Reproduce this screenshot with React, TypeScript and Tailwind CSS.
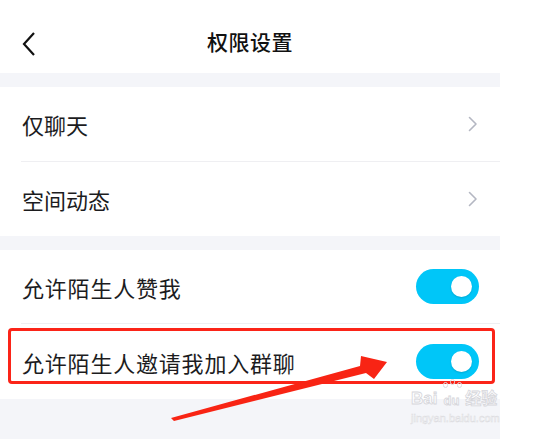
import React from 'react';

const font = { fontFamily: '"Noto Sans CJK SC", "Noto Sans", sans-serif' };

// Chevron pointing right, light gray
const Chevron: React.FC = () => (
  <svg width="10" height="16" viewBox="0 0 10 16" fill="none">
    <path d="M1.5 1.5 L8 8 L1.5 14.5" stroke="#b4b7c2" strokeWidth="1.6" strokeLinecap="round" strokeLinejoin="round" />
  </svg>
);

const Toggle: React.FC = () => (
  <div className="w-[63px] h-[35px] rounded-full bg-[#00c6f8] flex items-center justify-end pr-[7px]">
    <div className="w-[21px] h-[21px] rounded-full bg-white shadow-[0_1px_2px_rgba(0,0,0,0.15)]" />
  </div>
);

const LinkRow: React.FC<{ label: string; h: string }> = ({ label, h }) => (
  <div className={`flex items-center justify-between pl-[22px] pr-[22px] ${h}`}>
    <span className="text-[22px] text-[#1c1c1e] leading-none">{label}</span>
    <Chevron />
  </div>
);

const ToggleRow: React.FC<{ label: string; h: string }> = ({ label, h }) => (
  <div className={`flex items-center justify-between pl-[22px] pr-[21px] ${h}`}>
    <span className="text-[22px] text-[#1c1c1e] leading-none tracking-[0.8px]">{label}</span>
    <Toggle />
  </div>
);

const Divider: React.FC = () => <div className="ml-[21px] h-px bg-[#efeff2]" />;

export default function App() {
  return (
    <div className="relative w-[540px] h-[439px] bg-white overflow-hidden" style={font}>
      <div className="w-[500px] h-full flex flex-col">
        {/* Header */}
        <div className="relative h-[73px] flex items-center justify-center">
          <svg className="absolute left-[21px] top-[31px]" width="16" height="26" viewBox="0 0 16 26" fill="none">
            <path d="M13 2 L3 13 L13 24" stroke="#111" strokeWidth="2.2" strokeLinejoin="miter" />
          </svg>
          <span className="text-[21px] font-medium text-[#111] tracking-[0.5px] mt-[10px]">权限设置</span>
        </div>

        <div className="h-[14px] bg-[#f4f5f9]" />

        <LinkRow label="仅聊天" h="h-[74px]" />
        <Divider />
        <LinkRow label="空间动态" h="h-[74px]" />

        <div className="h-[14px] bg-[#f4f5f9]" />

        <ToggleRow label="允许陌生人赞我" h="h-[73px]" />
        <Divider />
        <ToggleRow label="允许陌生人邀请我加入群聊" h="h-[75px]" />

        <div className="flex-1 bg-[#f4f5f9]" />
      </div>

      {/* Red highlight box */}
      <div className="absolute left-[8px] top-[328px] w-[487px] h-[56px] border-[3px] border-[#fb2418] rounded-[4px]" />

      {/* Baidu watermark */}
      <div className="absolute left-[411px] top-[381px] flex flex-col items-start text-white/70 [-webkit-text-stroke:0.8px_#d6d6db] select-none">
        <div className="flex items-end leading-none" style={{ fontFamily: '"Liberation Sans", "Noto Sans CJK SC", sans-serif' }}>
          <span className="text-[17px] font-bold">Bai</span>
          <span className="relative text-[13px] font-bold mx-[3px] px-[3px] pt-[13px]">
            <span className="absolute left-[3px] top-[1px] w-[5px] h-[6px] rounded-full border border-[#dcdce0]" />
            <span className="absolute left-[10px] top-[-2px] w-[5px] h-[6px] rounded-full border border-[#dcdce0]" />
            <span className="absolute left-[17px] top-[1px] w-[5px] h-[6px] rounded-full border border-[#dcdce0]" />
            du
          </span>
          <span className="text-[16px] font-bold">经验</span>
        </div>
        <span className="text-[11px] leading-none mt-[6px] [-webkit-text-stroke:0.5px_#dcdce0]" style={{ fontFamily: '"Liberation Sans", sans-serif' }}>jingyan.baidu.com</span>
      </div>

      {/* Red arrow */}
      <svg className="absolute inset-0 pointer-events-none" width="540" height="439" viewBox="0 0 540 439">
        <polygon
          points="171,418 360,366 361,356 387,362 374,379 366,373 174,421"
          fill="#f82414"
        />
      </svg>
    </div>
  );
}
